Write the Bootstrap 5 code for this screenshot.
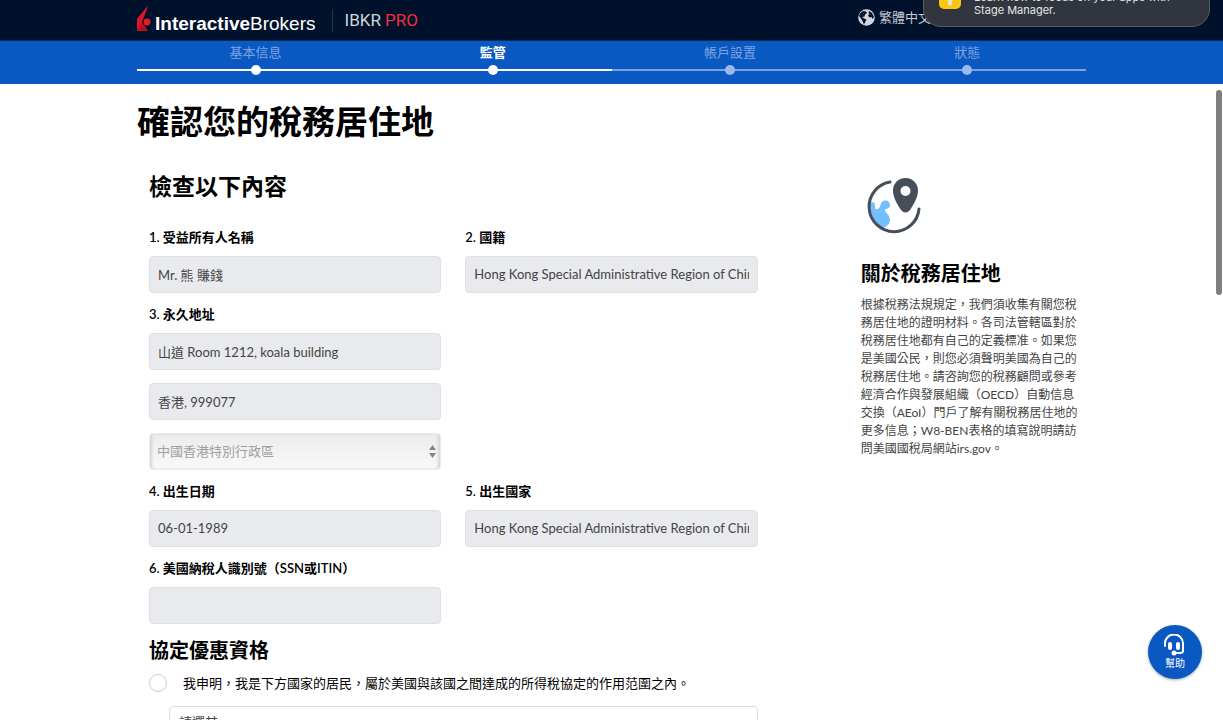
<!DOCTYPE html>
<html lang="zh-Hant">
<head>
<meta charset="utf-8">
<meta name="viewport" content="width=device-width, initial-scale=1">
<title>InteractiveBrokers - 確認您的稅務居住地</title>
<link href="https://cdn.jsdelivr.net/npm/bootstrap@5.3.0/dist/css/bootstrap.min.css" rel="stylesheet">
<style>
  body { font-family: Lato, "Noto Sans CJK TC", sans-serif; font-size: 13px; line-height: 20px; color: #000; background: #fff; }
  .page-width { max-width: 973px; }
  .site-header { height: 41px; background: #00122b; border-bottom: 1px solid #0b2c5e; }
  .brand-name { font-family: "Liberation Sans", sans-serif; font-size: 19px; line-height: 24px; color: #fff; text-decoration: none; }
  .brand-divider { width: 1px; height: 23px; background: #26344a; margin-left: 16px; }
  .account-type { font-family: Roboto, sans-serif; font-size: 17px; font-weight: 400; color: #d0d5dc; }
  .account-type span { color: #f02f41; }
  .language-btn { color: #c8ccd4; font-size: 13px; line-height: 20px; margin-right: 155px; margin-bottom: 6px; }
  .steps-bar { height: 43px; background: #0a58c2; }
  .step-item { color: #7fa5e0; position: relative; line-height: 22px; height: 43px; }
  .step-item::before { content: ""; position: absolute; left: 0; right: 0; top: 28px; height: 2px; background: #7da3de; }
  .step-item::after { content: ""; position: absolute; left: 50%; margin-left: -5px; top: 24px; width: 10px; height: 10px; border-radius: 50%; background: #9bb9e9; }
  .step-item.done::before, .step-item.done::after, .step-item.current::before, .step-item.current::after { background: #fff; }
  .step-item.current { color: #fff; font-weight: 700; }
  .scroll-pane { overflow-y: auto; scrollbar-width: none; min-height: 0; }
  .scroll-pane::-webkit-scrollbar { display: none; }
  .scroll-thumb { right: 1px; top: 90px; width: 6px; height: 205px; border-radius: 3px; background: #7f7f7f; }
  h1 { font-size: 33px; line-height: 40px; font-weight: 600; padding-top: 17px; margin-bottom: 28px; }
  h2 { font-size: 23px; line-height: 34px; font-weight: 600; margin-bottom: 26px; }
  h3 { font-size: 20px; line-height: 26px; font-weight: 600; margin-bottom: 10px; }
  .field-group { margin-bottom: 13px; }
  .field-label { display: block; font-weight: 600; line-height: 16px; margin-bottom: 11px; height: 16px; }
  .form-control.field-box { height: 37px; font-size: 13px; line-height: 20px; padding: 6px 8px 7px; color: #444; background: #e9eaed; border: 1px solid #dfe0e3; border-radius: 4px; }
  .country-select { display: block; height: 37px; font-size: 13px; padding: 6px 7px 7px; border-radius: 4px; color: #a0a0a0; appearance: none; opacity: 1; border: 1px solid #ebebeb;
    background: linear-gradient(#ececec, #f8f9f9); box-shadow: inset 3px 0 3px -1px #d5d5d5, inset -3px 0 3px -1px #d5d5d5; }
  .select-arrows { right: 5px; top: 12px; }
  .form-check-input.claim-radio { width: 18px; height: 18px; margin: 0; border: 1px solid #ccc; }
  .claim-row { margin-bottom: 13px; }
  .claim-text { line-height: 20px; }
  .country-choice { height: 37px; font-size: 13px; padding: 5px 9px 8px; border-color: #ddd; border-radius: 4px; color: #444; background-image: none; }
  .info-icon { margin-top: 3px; }
  .info-text { font-size: 12px; line-height: 18px; color: #444; }
  .system-note { top: -50px; right: 13px; width: 287px; height: 77px; background: #30353e; border: 1px solid #555b65; border-radius: 18px; color: #e4e6e9; font-family: Inter, sans-serif; font-size: 11px; line-height: 13px; z-index: 5; }
  .system-note p { left: 50px; bottom: 9px; width: 225px; }
  .system-note svg { left: 15px; bottom: 17px; }
  .help-btn { right: 21px; bottom: 41px; width: 54px; height: 54px; background: #0a58c2; color: #fff; font-size: 10px; line-height: 14px; box-shadow: 0 1px 3px #0005; }
</style>
</head>
<body class="d-flex flex-column vh-100 overflow-hidden">
<header class="site-header flex-shrink-0">
  <div class="container page-width h-100 d-flex align-items-center">
    <svg class="mb-1" width="14" height="25" viewBox="0 0 14 25" aria-hidden="true"><path d="M11 0 0 13v12z" fill="#e0182a"/><path d="M0 15 0 25h11L5 16z" fill="#b70f1f"/><path d="M11 0 5 16 0 25V13z" fill="#dc1728"/><circle cx="10" cy="16" r="3.500" fill="#e31b2d"/></svg>
    <a class="brand-name ms-1 pt-2" href="#"><strong>Interactive</strong>Brokers</a>
    <span class="brand-divider me-2"></span>
    <span class="account-type ps-1">IBKR <span>PRO</span></span>
    <button type="button" class="language-btn btn p-0 border-0 ms-auto d-flex align-items-center gap-1">
      <svg width="17" height="17" viewBox="0 0 17 17" aria-hidden="true"><circle cx="8.500" cy="8.500" r="8.300" fill="#d2d5db"/><path d="M2 4.500 5 2l3 .5 1 1.500-2 1.500-.5 2L4 8l2 1.500 2.500 1-1 2L6 15.500 4.500 12 3 9.500 1 7zM11 2l3 2 2 4-1.500 2-1-2-2 .5-1.500-2 1.500-1.500L10.500 4z" fill="#00122b"/></svg>
      繁體中文
    </button>
  </div>
</header>
<aside class="system-note position-absolute">
  <svg class="position-absolute" width="22" height="22" viewBox="0 0 22 22" aria-hidden="true"><rect width="22" height="22" rx="5" fill="#fcc612"/><circle cx="11" cy="9" r="5" fill="#ffe88a"/><path d="M9 13h4v4l-2 2-2-2z" fill="#e8e3cf"/></svg>
  <p class="position-absolute mb-0">Learn how to focus on your apps with Stage Manager.</p>
</aside>
<nav class="steps-bar flex-shrink-0">
  <div class="container page-width">
    <div class="row g-0 text-center">
      <div class="col-3 step-item done">基本信息</div>
      <div class="col-3 step-item current">監管</div>
      <div class="col-3 step-item">帳戶設置</div>
      <div class="col-3 step-item">狀態</div>
    </div>
  </div>
</nav>
<main class="scroll-pane flex-grow-1">
  <div class="container page-width">
    <h1>確認您的稅務居住地</h1>
    <div class="row mx-0">
      <form class="col-8">
        <h2>檢查以下內容</h2>
        <div class="row">
          <div class="col-6 field-group"><label class="field-label" for="owner">1. 受益所有人名稱</label><input class="form-control field-box" id="owner" value="Mr. 熊 賺錢" readonly></div>
          <div class="col-6 field-group"><label class="field-label" for="nation">2. 國籍</label><input class="form-control field-box" id="nation" value="Hong Kong Special Administrative Region of China" readonly></div>
        </div>
        <div class="row">
          <div class="col-6">
            <div class="field-group"><label class="field-label" for="street">3. 永久地址</label><input class="form-control field-box" id="street" value="山道 Room 1212, koala building" readonly></div>
            <div class="field-group"><input class="form-control field-box" aria-label="城市" value="香港, 999077" readonly></div>
            <div class="field-group position-relative">
              <select class="country-select w-100" aria-label="國家/地區" disabled><option>中國香港特別行政區</option></select>
              <svg class="select-arrows position-absolute" width="7" height="13" viewBox="0 0 7 13" aria-hidden="true"><path d="M3.500 0 7 5H0zM0 8h7l-3.500 5z" fill="#858585"/></svg>
            </div>
          </div>
        </div>
        <div class="row">
          <div class="col-6 field-group"><label class="field-label" for="birth">4. 出生日期</label><input class="form-control field-box" id="birth" value="06-01-1989" readonly></div>
          <div class="col-6 field-group"><label class="field-label" for="birthplace">5. 出生國家</label><input class="form-control field-box" id="birthplace" value="Hong Kong Special Administrative Region of China" readonly></div>
        </div>
        <div class="row">
          <div class="col-6 field-group"><label class="field-label" for="ssn">6. 美國納稅人識別號（SSN或ITIN）</label><input class="form-control field-box" id="ssn" readonly></div>
        </div>
        <h3>協定優惠資格</h3>
        <div class="claim-row d-flex align-items-center">
          <input class="form-check-input claim-radio flex-shrink-0" type="radio" name="treaty" id="treaty">
          <label class="claim-text ps-3 text-nowrap" for="treaty">我申明，我是下方國家的居民，屬於美國與該國之間達成的所得稅協定的作用范圍之內。</label>
        </div>
        <div class="ps-3 ms-1 mb-4"><select class="form-select country-choice" aria-label="國家"><option>請選其一</option></select></div>
      </form>
      <section class="col-3 offset-1 pe-0">
        <svg class="info-icon d-block" width="64" height="64" viewBox="0 0 64 64" aria-hidden="true">
          <path d="M9 31q5-2 5 2c0 4 0 5 3 4 3-2 2-5 4-7 3-3 8-1 8 3 0 5-6 3-5 6 1 2 5 4 5 9 0 4-3 6-7 8-7-4-13-12-13-25z" fill="#73bfff"/>
          <path d="M29 10A25 25 0 1 0 58 37" fill="none" stroke="#464e5a" stroke-width="3" stroke-linecap="round"/>
          <path fill-rule="evenodd" d="M44.500 6C37 6 32 12 32 18.500 32 25 36 32 40 38q4.500 5 9 0c4-6 8-13 8-19.500C57 12 52 6 44.500 6zm0 8a5 5 0 1 1 0 10 5 5 0 0 1 0-10z" fill="#464e5a"/>
        </svg>
        <h3 class="mt-4">關於稅務居住地</h3>
        <p class="info-text">根據稅務法規規定，我們須收集有關您稅務居住地的證明材料。各司法管轄區對於稅務居住地都有自己的定義標准。如果您是美國公民，則您必須聲明美國為自己的稅務居住地。請咨詢您的稅務顧問或參考經濟合作與發展組織（OECD）自動信息交換（AEoI）門戶了解有關稅務居住地的更多信息；W8-BEN表格的填寫說明請訪問美國國稅局網站irs.gov。</p>
      </section>
    </div>
  </div>
</main>
<div class="scroll-thumb position-absolute"></div>
<button type="button" class="help-btn btn rounded-circle border-0 p-0 position-absolute d-flex flex-column align-items-center justify-content-center">
  <svg width="22" height="22" viewBox="0 0 22 22" fill="none" stroke="#fff" stroke-width="2" stroke-linecap="round" aria-hidden="true"><path d="M1 12V10a9 9 0 0 1 18-1v8q0 2-3 2h-4"/><path d="M6 10v4M14 10v4" stroke-width="4"/><circle cx="10" cy="19" r="1.500" fill="#fff"/></svg>
  幫助
</button>
<script src="https://cdn.jsdelivr.net/npm/bootstrap@5.3.0/dist/js/bootstrap.bundle.min.js"></script>
</body>
</html>
